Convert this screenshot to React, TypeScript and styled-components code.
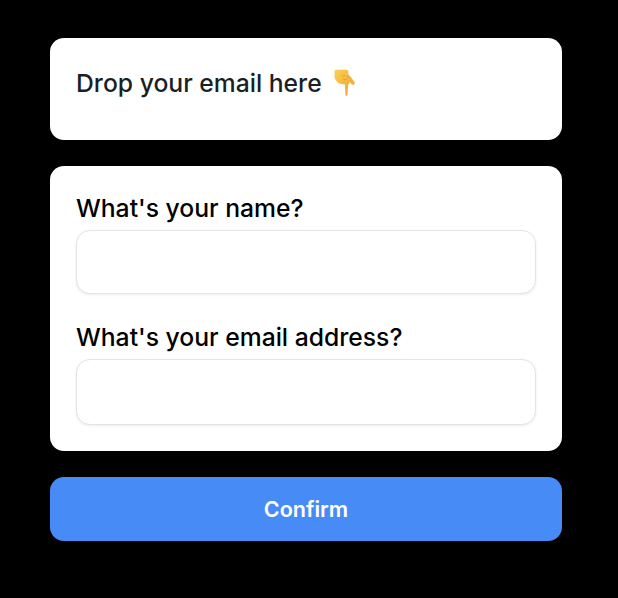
import React from "react";
import styled, { createGlobalStyle } from "styled-components";

const GlobalStyle = createGlobalStyle`
  html, body {
    margin: 0;
    padding: 0;
    background: #000;
  }
`;

const Page = styled.main`
  width: 618px;
  height: 598px;
  box-sizing: border-box;
  padding: 38px 56px 0 50px;
  display: flex;
  flex-direction: column;
  gap: 26px;
  font-family: Inter, "Liberation Sans", sans-serif;
  -webkit-font-smoothing: antialiased;
`;

const Card = styled.section`
  background: #fff;
  border-radius: 14px;
  padding: 26px;
  display: flex;
  flex-direction: column;
`;

const Title = styled.h2`
  margin: 0 0 12px;
  display: flex;
  align-items: center;
  gap: 11px;
  font-size: 24.7px;
  line-height: 38px;
  font-weight: 500;
  color: #1a1f26;
`;

const Field = styled.label`
  display: flex;
  flex-direction: column;
  & + & {
    margin-top: 27px;
  }
`;

const LabelText = styled.span<{ $gap: number }>`
  font-size: 24.7px;
  line-height: 33px;
  font-weight: 500;
  color: #000;
  margin-bottom: ${(props) => props.$gap}px;
`;

const Input = styled.input<{ $height: number }>`
  height: ${(props) => props.$height}px;
  box-sizing: border-box;
  border: 1px solid #e4e4e6;
  border-radius: 14px;
  background: #fff;
  box-shadow: 0 1px 3px rgba(0, 0, 0, 0.08);
  outline: none;
`;

const ConfirmButton = styled.button`
  height: 64px;
  border: 0;
  border-radius: 14px;
  background: #478bf7;
  color: #fff;
  font-family: inherit;
  font-size: 21.5px;
  font-weight: 600;
`;

const PointingDown = () => (
  <svg width="24" height="28" viewBox="0 0 24 28" aria-hidden="true">
    <defs>
      <linearGradient id="hand" x1="0" y1="0" x2="1" y2="1">
        <stop offset="0" stopColor="#fbcf52" />
        <stop offset="1" stopColor="#eca32f" />
      </linearGradient>
    </defs>
    <path
      d="M1.500 2.500C1.500 1.400 2.300.8 3.400.8h10c1.100 0 1.900.7 1.900 1.700v3.300c1.400.7 2.500 1.800 3.300 3.300l2.800 4c.6 1 .4 2-.4 2.500-.8.500-1.700.3-2.400-.4l-2-2.200-.2 1.500-1.300 1.300-.6 9.700c0 .9-.5 1.400-1 1.400s-1-.5-1-1.400l-.8-10.300c-2.800.2-5.500-.3-7.100-1.900C2.900 11.800 1.500 9.500 1.500 7.500Z"
      fill="url(#hand)"
    />
    <path
      d="M15.300 6c-.9 1.100-.6 2.300.4 3.200M9 6.800c1 .4 2 .4 2.800 0M10.500 10.400c1 .5 2 .5 3 0"
      fill="none"
      stroke="#d08a28"
      strokeWidth=".6"
      strokeLinecap="round"
    />
  </svg>
);

export default function App() {
  return (
    <>
      <GlobalStyle />
      <Page>
        <Card>
          <Title>
            Drop your email here <PointingDown />
          </Title>
        </Card>
        <Card>
          <Field>
            <LabelText $gap={5}>What's your name?</LabelText>
            <Input type="text" $height={64} />
          </Field>
          <Field>
            <LabelText $gap={5}>What's your email address?</LabelText>
            <Input type="email" $height={66} />
          </Field>
        </Card>
        <ConfirmButton>Confirm</ConfirmButton>
      </Page>
    </>
  );
}
